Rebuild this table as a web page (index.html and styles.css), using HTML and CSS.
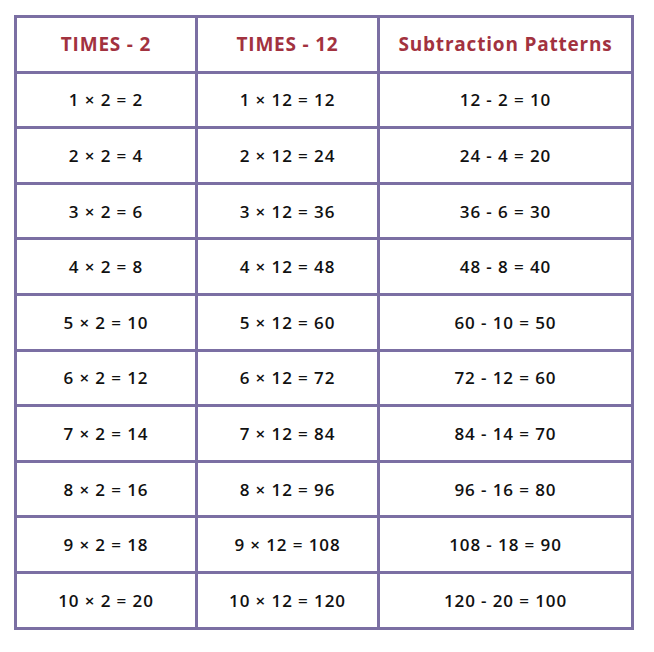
FILE: index.html
```html
<!DOCTYPE html>
<html lang="en">
<head>
<meta charset="utf-8">
<title>Times 2 and Times 12</title>
<link rel="stylesheet" href="styles.css">
</head>
<body>
<table class="facts">
  <colgroup>
    <col class="c1"><col class="c2"><col class="c3">
  </colgroup>
  <thead>
    <tr><th>TIMES - 2</th><th>TIMES - 12</th><th>Subtraction Patterns</th></tr>
  </thead>
  <tbody>
    <tr><td>1 × 2 = 2</td><td>1 × 12 = 12</td><td>12 - 2 = 10</td></tr>
    <tr><td>2 × 2 = 4</td><td>2 × 12 = 24</td><td>24 - 4 = 20</td></tr>
    <tr><td>3 × 2 = 6</td><td>3 × 12 = 36</td><td>36 - 6 = 30</td></tr>
    <tr><td>4 × 2 = 8</td><td>4 × 12 = 48</td><td>48 - 8 = 40</td></tr>
    <tr><td>5 × 2 = 10</td><td>5 × 12 = 60</td><td>60 - 10 = 50</td></tr>
    <tr><td>6 × 2 = 12</td><td>6 × 12 = 72</td><td>72 - 12 = 60</td></tr>
    <tr><td>7 × 2 = 14</td><td>7 × 12 = 84</td><td>84 - 14 = 70</td></tr>
    <tr><td>8 × 2 = 16</td><td>8 × 12 = 96</td><td>96 - 16 = 80</td></tr>
    <tr><td>9 × 2 = 18</td><td>9 × 12 = 108</td><td>108 - 18 = 90</td></tr>
    <tr><td>10 × 2 = 20</td><td>10 × 12 = 120</td><td>120 - 20 = 100</td></tr>
  </tbody>
</table>
</body>
</html>
```
FILE: styles.css
```css
html, body {
  margin: 0;
  padding: 0;
  background: #ffffff;
}
body {
  padding: 15px 0 0 14px;
  font-family: "Open Sans", "Liberation Sans", sans-serif;
}
.facts {
  border-collapse: separate;
  border-spacing: 0;
  border-top: 3px solid #7b6fa3;
  border-left: 3px solid #7b6fa3;
  table-layout: fixed;
  width: 620px;
}
.c1 { width: 181px; }
.c2 { width: 182px; }
.c3 { width: 254px; }
.facts th,
.facts td {
  border-right: 3px solid #7b6fa3;
  border-bottom: 3px solid #7b6fa3;
  height: 52.6px;
  padding: 0;
  text-align: center;
  vertical-align: middle;
  white-space: nowrap;
}
.facts th {
  color: #a2323f;
  font-size: 19px;
  font-weight: 700;
  letter-spacing: 0.8px;
}
.facts td {
  color: #111111;
  font-size: 17px;
  font-weight: 600;
  letter-spacing: 0.9px;
}
```
